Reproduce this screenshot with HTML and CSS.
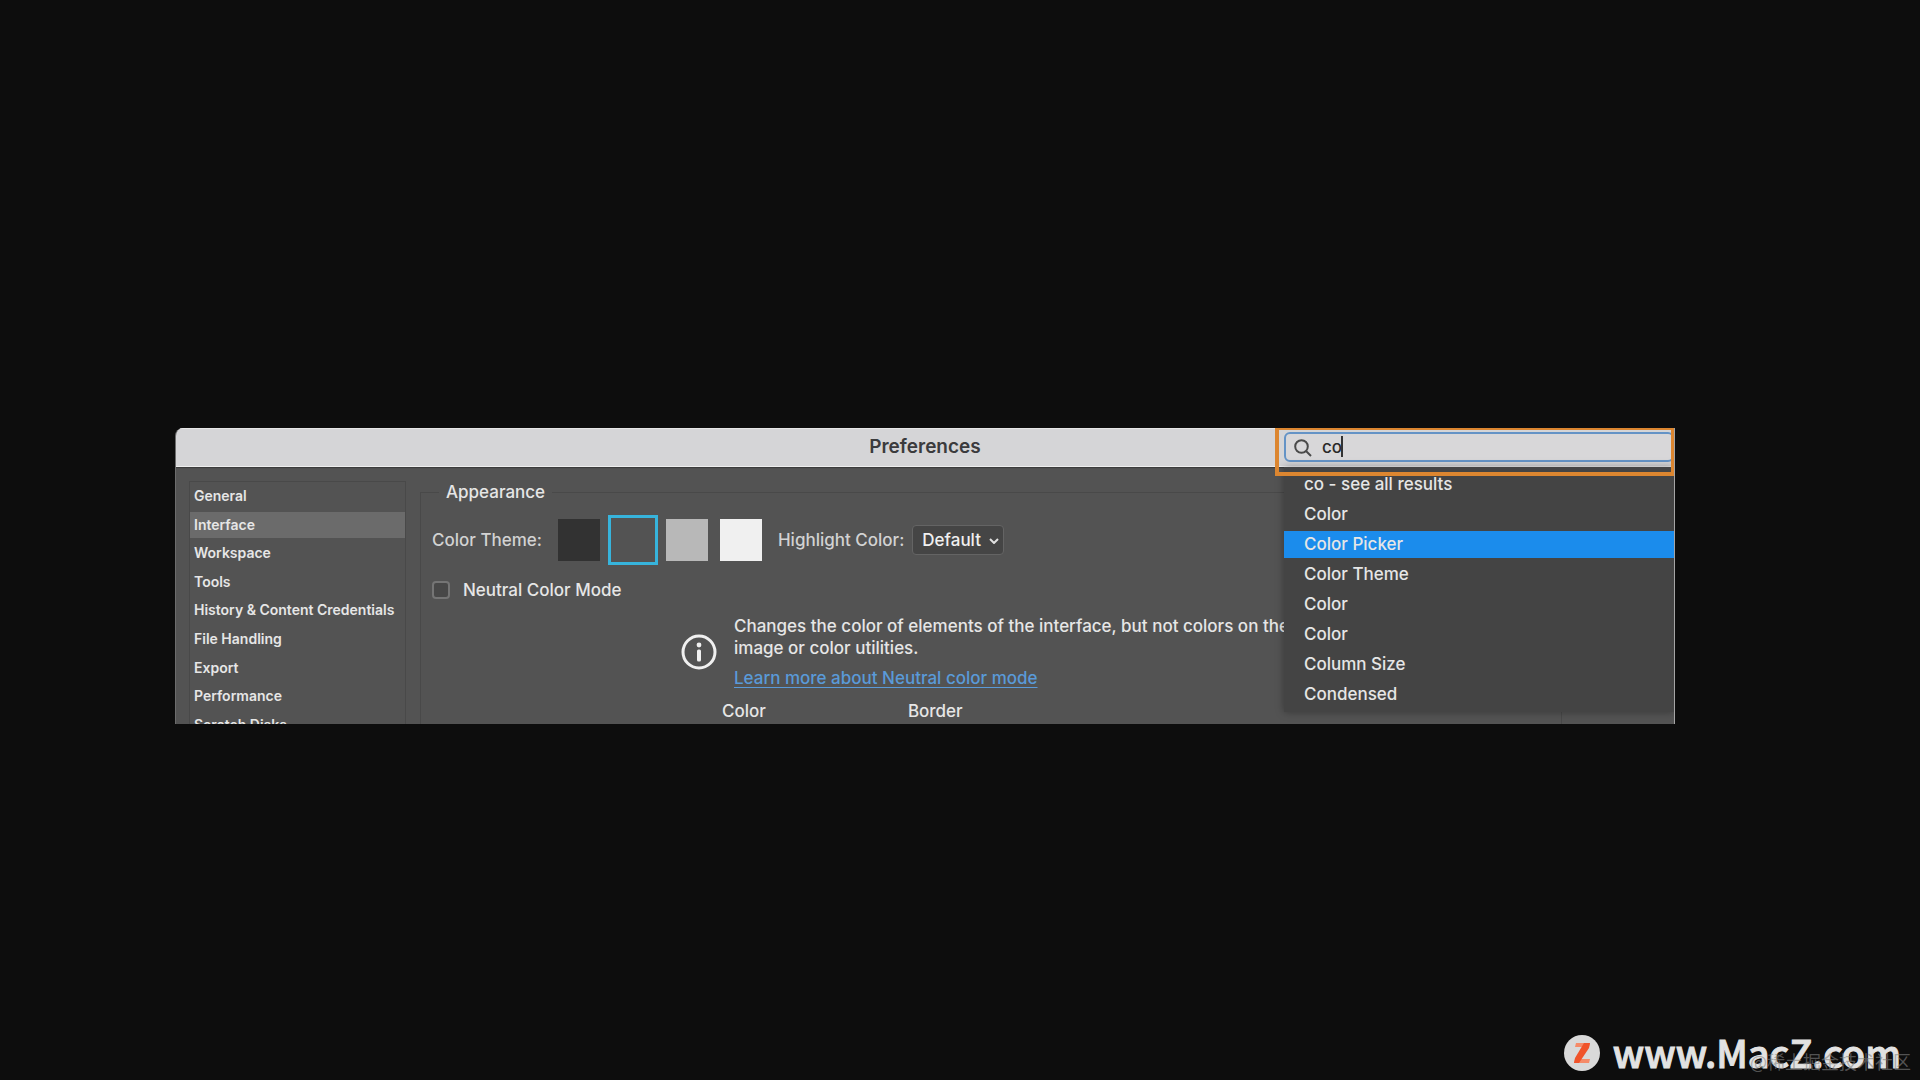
FILE: index.html
```html
<!DOCTYPE html>
<html lang="en">
<head>
  <meta charset="UTF-8">
  <title>Preferences</title>
  <link rel="stylesheet" href="styles.css">
</head>
<body>

  <main class="window">
    <header class="titlebar">
      <h1>Preferences</h1>
      <div class="search">
        <svg class="search-icon" viewBox="0 0 18 18" aria-hidden="true">
          <circle cx="7.5" cy="7.5" r="6.3"/>
          <path d="M12 12l5 5"/>
        </svg>
        <input type="text" value="co" aria-label="Search preferences">
        <span class="caret"></span>
      </div>
    </header>

    <div class="content">
      <nav class="sidebar">
        <ul>
          <li><button type="button">General</button></li>
          <li><button type="button" class="active">Interface</button></li>
          <li><button type="button">Workspace</button></li>
          <li><button type="button">Tools</button></li>
          <li><button type="button">History &amp; Content Credentials</button></li>
          <li><button type="button">File Handling</button></li>
          <li><button type="button">Export</button></li>
          <li><button type="button">Performance</button></li>
          <li><button type="button">Scratch Disks</button></li>
        </ul>
      </nav>

      <fieldset class="appearance">
        <legend>Appearance</legend>

        <div class="theme-row">
          <span class="muted">Color Theme:</span>
          <div class="swatches">
            <button type="button" class="swatch darkest" aria-label="Darkest"></button>
            <button type="button" class="swatch dark selected" aria-label="Dark"></button>
            <button type="button" class="swatch light" aria-label="Light"></button>
            <button type="button" class="swatch lightest" aria-label="Lightest"></button>
          </div>
          <label class="muted" for="highlight">Highlight Color:</label>
          <div class="select">
            <select id="highlight">
              <option>Default</option>
            </select>
            <svg viewBox="0 0 10 6" aria-hidden="true"><path d="M1 1l4 4 4-4"/></svg>
          </div>
        </div>

        <div class="neutral-row">
          <input type="checkbox" id="neutral">
          <label for="neutral">Neutral Color Mode</label>
        </div>

        <div class="info">
          <svg viewBox="0 0 36 36" aria-hidden="true">
            <circle cx="18" cy="18" r="16" fill="none" stroke="#f0f0f0" stroke-width="3"/>
            <circle cx="18" cy="11" r="2.4" fill="#f0f0f0"/>
            <rect x="16" y="15.5" width="4" height="12" rx="1.5" fill="#f0f0f0"/>
          </svg>
          <div>
            <p>Changes the color of elements of the interface, but not colors on the image or color utilities.</p>
            <a href="#">Learn more about Neutral color mode</a>
          </div>
        </div>

        <div class="columns">
          <span>Color</span>
          <span>Border</span>
        </div>
      </fieldset>
    </div>

    <ul class="results">
      <li><button type="button">co - see all results</button></li>
      <li><button type="button">Color</button></li>
      <li><button type="button" class="active">Color Picker</button></li>
      <li><button type="button">Color Theme</button></li>
      <li><button type="button">Color</button></li>
      <li><button type="button">Color</button></li>
      <li><button type="button">Column Size</button></li>
      <li><button type="button">Condensed</button></li>
    </ul>
    <div class="callout"></div>
  </main>

  <footer>
    <svg class="logo" viewBox="0 0 36 36" aria-hidden="true">
      <circle cx="18" cy="18" r="18" fill="#d9d9d9"/>
      <path d="M12 8h14l-1 4H11zM11 24h15l-1 4H10z" fill="#f58a68"/>
      <path d="M20 8h6l-1 5-10 15h-5l1-5z" fill="#f0532a"/>
    </svg>
    <span class="site">www.MacZ.com</span>
    <span class="watermark">@稀土掘金技术社区</span>
  </footer>

</body>
</html>
```

FILE: styles.css
```css
* {
  box-sizing: border-box;
}

body {
  margin: 0;
  min-height: 100vh;
  display: flex;
  flex-direction: column;
  padding: 428px 0 0;
  background: #0d0d0d;
  color: #e6e6e6;
  font-family: Inter, "Liberation Sans", sans-serif;
  font-size: 17px;
  font-weight: 500;
  line-height: 22px;
}

button, input, select {
  font: inherit;
  color: inherit;
}

ul {
  list-style: none;
  margin: 0;
  padding: 0;
}

.window {
  position: relative;
  height: 296px;
  margin: 0 245px 0 175px;
  overflow: hidden;
  background: #535353;
  border-right: 1px solid #a5a5a5;
  border-left: 1px solid #6c6c6c;
  border-top-left-radius: 8px;
}

/* title bar */
.titlebar {
  display: grid;
  grid-template-columns: 390px 1fr 390px;
  align-items: center;
  height: 39px;
  padding-bottom: 2px;
  background: #d5d5d7;
  border-top: 1px solid #e6e6e6;
  border-bottom: 1px solid #eee;
  box-shadow: 0 1px 1px #3c3c3c;
}

.titlebar h1 {
  grid-column: 2;
  margin: 0;
  font-size: 19px;
  font-weight: 600;
  text-align: center;
  color: #3b3b3d;
}

.search {
  position: relative;
}

.search input {
  display: block;
  width: 100%;
  height: 30px;
  padding: 0 0 0 36px;
  border: 2px solid #6493c6;
  border-radius: 6px;
  background: #d8d7d9;
  color: #2a2a2a;
}

.search-icon {
  position: absolute;
  left: 10px;
  top: 7px;
  width: 18px;
  height: 18px;
  fill: none;
  stroke: #4a4a4a;
  stroke-width: 2;
}

.caret {
  position: absolute;
  left: 57px;
  top: 4px;
  width: 2px;
  height: 21px;
  background: #333;
}

/* panels */
.content {
  display: flex;
  gap: 14px;
  padding: 14px 112px 0 13px;
}

.sidebar {
  width: 217px;
  border: 1px solid #494949;
  font-size: 14px;
  font-weight: 600;
}

.sidebar ul {
  display: grid;
  grid-template-rows: repeat(9, 1fr);
  align-items: center;
  height: 257px;
}

.sidebar button {
  display: block;
  width: 100%;
  height: 26px;
  padding: 0 4px;
  border: 0;
  background: none;
  text-align: left;
  white-space: nowrap;
}

.sidebar .active {
  background: #6b6b6b;
}

.appearance {
  flex: 1;
  min-width: 0;
  height: 260px;
  margin: 0;
  padding: 0 0 0 11px;
  border: 1px solid #494949;
}

.appearance legend {
  margin-left: 7px;
  padding: 0 7px;
}

.muted {
  color: #d2d2d2;
}

.theme-row {
  display: flex;
  align-items: center;
  margin-top: 12px;
}

.swatches {
  display: flex;
  gap: 12px;
  margin: 4px 16px;
}

.swatch {
  width: 42px;
  height: 42px;
  padding: 0;
  border: 0;
}

.darkest {
  background: #323232;
}

.dark {
  background: #535353;
}

.light {
  background: #b8b8b8;
}

.lightest {
  background: #f0f0f0;
}

.swatch.selected {
  outline: 3px solid #37b4dc;
  outline-offset: 1px;
}

.select {
  position: relative;
  margin-left: 8px;
}

.select select {
  appearance: none;
  display: block;
  width: 92px;
  height: 30px;
  padding: 0 0 0 9px;
  border: 1px solid #646464;
  border-radius: 4px;
  background: #454545;
  color: #f0f0f0;
}

.select svg {
  position: absolute;
  right: 5px;
  top: 13px;
  width: 10px;
  height: 6px;
  fill: none;
  stroke: #e0e0e0;
  stroke-width: 2;
}

.neutral-row {
  display: flex;
  align-items: center;
  gap: 13px;
  margin-top: 14px;
}

.neutral-row input {
  appearance: none;
  width: 18px;
  height: 18px;
  margin: 0;
  border: 2px solid #757575;
  border-radius: 4px;
  background: #484848;
}

.info {
  display: flex;
  align-items: center;
  gap: 17px;
  margin: 14px 0 0 249px;
}

.info svg {
  flex: none;
  width: 36px;
  height: 36px;
}

.info p {
  width: 600px;
  margin: 0 0 8px;
}

.info a {
  color: #5a9ad8;
  text-underline-offset: 3px;
}

.columns {
  display: flex;
  gap: 142px;
  margin: 11px 0 0 290px;
}

/* search results menu */
.results {
  position: absolute;
  top: 39px;
  right: 0;
  width: 390px;
  padding: 3px 0 2px;
  background: #444;
  box-shadow: 0 0 8px rgba(0, 0, 0, 0.35);
}

.results li {
  padding: 1px 0 2px;
}

.results button {
  display: block;
  width: 100%;
  height: 27px;
  padding: 0 20px 1px;
  border: 0;
  background: none;
  text-align: left;
}

.results .active {
  background: #1b8cec;
}

.callout {
  position: absolute;
  top: 0;
  right: -1px;
  width: 400px;
  height: 48px;
  border: 4px solid #dc8630;
  border-top-width: 2px;
  pointer-events: none;
}

footer {
  position: relative;
  display: flex;
  align-items: center;
  gap: 13px;
  margin: auto 19px 4px auto;
}

.logo {
  width: 36px;
  height: 36px;
}

.site {
  padding-bottom: 2px;
  color: #e2e2e2;
  font-family: "Noto Sans CJK SC", sans-serif;
  font-size: 38px;
  line-height: 44px;
  -webkit-text-stroke: 1px #e2e2e2;
}

.watermark {
  position: absolute;
  right: -10px;
  bottom: 4px;
  color: rgba(130, 130, 130, 0.6);
  font-family: "Noto Sans CJK SC", sans-serif;
  font-size: 18px;
  font-weight: 400;
}
```
